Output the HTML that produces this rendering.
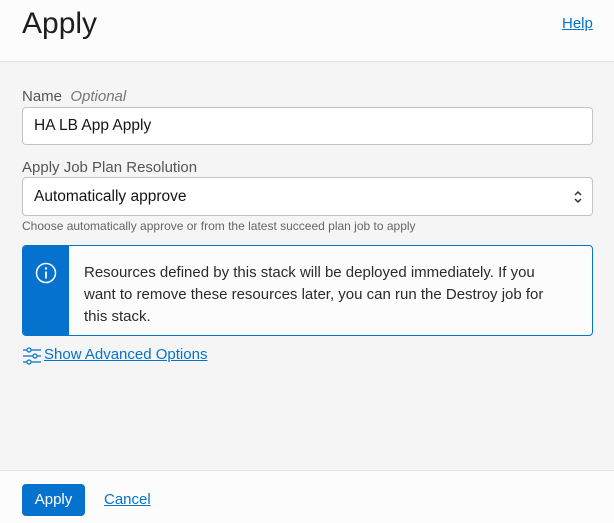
<!DOCTYPE html>
<html><head><style>
*{box-sizing:border-box;margin:0;padding:0}
body{width:614px;height:523px;background:#f5f5f5;font-family:"Liberation Sans",sans-serif;color:#161513;position:relative;overflow:hidden}
.hdr{position:absolute;left:0;top:0;width:614px;height:62px;background:#fcfcfc;border-bottom:1px solid #e3e3e3}
.hdr h1{position:absolute;left:22px;top:7px;font-size:30px;font-weight:normal;color:#1e1e1e}
.help{position:absolute;left:562px;top:15px;font-size:15px;color:#0572ce;text-decoration:underline}
.lbl{position:absolute;left:22px;font-size:15px;color:#555}
.inp{position:absolute;left:22px;width:571px;background:#fff;border:1px solid #c4c4c4;border-radius:4px;font-size:15.5px;color:#161513;padding-left:11px}
.hint{position:absolute;left:22px;top:219px;font-size:12px;color:#666}
.info{position:absolute;left:22px;top:245px;width:571px;height:91px;border:1px solid #0572ce;border-radius:4px;background:#fcfcfc;overflow:hidden}
.info .bar{position:absolute;left:0;top:0;width:46px;height:100%;background:#0572ce}
.info p{position:absolute;left:61px;top:16px;width:470px;font-size:15px;line-height:22px;color:#2b2b2b}
.adv{position:absolute;left:22px;top:346px;font-size:15px;color:#0572ce}
.adv span{text-decoration:underline;position:absolute;left:22px;top:0px;white-space:nowrap}
.ftr{position:absolute;left:0;top:470px;width:614px;height:53px;background:#fcfcfc;border-top:1px solid #e3e3e3}
.btn{position:absolute;left:22px;top:13px;width:63px;height:32px;background:#0572ce;border-radius:4px;color:#fff;font-size:15px;text-align:center;line-height:32px}
.cancel{position:absolute;left:104px;top:20px;font-size:15px;color:#0572ce;text-decoration:underline}
</style></head><body>
<div class="hdr"><h1>Apply</h1><span class="help">Help</span></div>
<div class="lbl" style="top:88px">Name &nbsp;<i style="color:#777">Optional</i></div>
<div class="inp" style="top:107px;height:38px;line-height:36px">HA LB App Apply</div>
<div class="lbl" style="top:159px">Apply Job Plan Resolution</div>
<div class="inp" style="top:177px;height:39px;line-height:38px">Automatically approve
<svg style="position:absolute;right:9px;top:11px" width="10" height="16" viewBox="0 0 10 16"><path d="M2 6l3-3 3 3M2 10l3 3 3-3" stroke="#333" stroke-width="1.5" fill="none"/></svg></div>
<div class="hint">Choose automatically approve or from the latest succeed plan job to apply</div>
<div class="info"><div class="bar"><svg style="position:absolute;left:12px;top:16px" width="22" height="22" viewBox="0 0 22 22"><circle cx="11" cy="11" r="9.5" stroke="#fff" stroke-width="1.5" fill="none"/><circle cx="11" cy="6.5" r="1.2" fill="#fff"/><path d="M11 9.5v7" stroke="#fff" stroke-width="1.8"/></svg></div>
<p>Resources defined by this stack will be deployed immediately. If you want to remove these resources later, you can run the Destroy job for this stack.</p></div>
<div class="adv"><svg style="position:absolute;left:0;top:1px" width="20" height="18" viewBox="0 0 20 18"><g stroke="#0572ce" stroke-width="1.2" fill="none"><circle cx="7" cy="3" r="2"/><path d="M1 3h4M9 3h10"/><circle cx="13" cy="9" r="2"/><path d="M1 9h10M15 9h4"/><circle cx="7" cy="15" r="2"/><path d="M1 15h4M9 15h10"/></g></svg><span>Show Advanced Options</span></div>
<div class="ftr"><div class="btn">Apply</div><span class="cancel">Cancel</span></div>
</body></html>
